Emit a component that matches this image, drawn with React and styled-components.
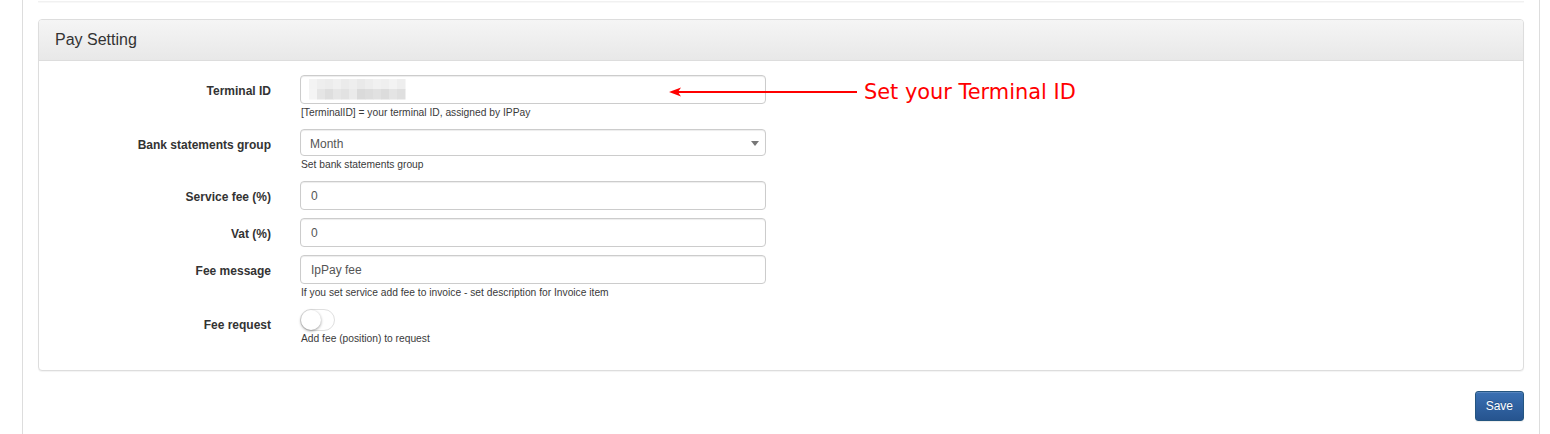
import React from 'react';
import styled, { createGlobalStyle } from 'styled-components';

const GlobalStyle = createGlobalStyle`
  html, body {
    margin: 0;
    padding: 0;
    background: #fff;
  }
  body {
    font-family: "Liberation Sans", Arial, sans-serif;
    color: #333;
  }
`;

const Page = styled.div`
  margin: 0 10px 0 22px;
  min-height: 434px;
  border-left: 1px solid #ddd;
  border-right: 1px solid #ddd;
  padding: 0 15px 0 15px;
  box-sizing: border-box;
  background: #fff;
`;

const PrevEdge = styled.div`
  height: 1px;
  margin-bottom: 17px;
  border-bottom: 1px solid #f1f1f1;
  box-shadow: 0 1px 1px rgba(0, 0, 0, 0.03);
`;

const Panel = styled.div`
  border: 1px solid #ddd;
  border-radius: 4px;
  background: #fff;
  box-shadow: 0 1px 1px rgba(0, 0, 0, 0.05);
`;

const PanelHeading = styled.div`
  height: 41px;
  box-sizing: border-box;
  padding: 10px 16px;
  border-bottom: 1px solid #ddd;
  border-radius: 3px 3px 0 0;
  background: linear-gradient(to bottom, #f5f5f5 0%, #e8e8e8 100%);
  font-size: 16px;
  line-height: 20px;
  color: #333;
`;

const PanelBody = styled.div`
  padding: 14px 0 23px 0;
`;

const Row = styled.div`
  display: flex;
  align-items: flex-start;
  margin-bottom: ${p => (p.$last ? 0 : '8px')};
`;

const Label = styled.label`
  width: 232px;
  flex: none;
  padding-top: 8px;
  line-height: 16px;
  text-align: right;
  font-weight: bold;
  font-size: 12px;
  color: #333;
`;

const Field = styled.div`
  position: relative;
  width: 466px;
  margin-left: 29px;
`;

const Input = styled.input`
  display: block;
  width: 100%;
  height: 29px;
  box-sizing: border-box;
  padding: 5px 10px;
  border: 1px solid #ccc;
  border-radius: 4px;
  box-shadow: inset 0 1px 1px rgba(0, 0, 0, 0.075);
  font-family: inherit;
  font-size: 12px;
  color: #555;
  background: #fff;
  outline: none;
`;

const SelectWrap = styled.div`
  position: relative;
  &::after {
    content: '';
    position: absolute;
    right: 7px;
    top: 12px;
    border-left: 4px solid transparent;
    border-right: 4px solid transparent;
    border-top: 5px solid #777;
    pointer-events: none;
  }
`;

const Select = styled.select`
  display: block;
  width: 100%;
  height: 27px;
  box-sizing: border-box;
  padding: 4px 9px 1px;
  border: 1px solid #ccc;
  border-radius: 4px;
  box-shadow: inset 0 1px 1px rgba(0, 0, 0, 0.075);
  font-family: inherit;
  font-size: 12px;
  color: #555;
  background: #fff;
  appearance: none;
  -webkit-appearance: none;
  outline: none;
`;

const Masked = styled.svg`
  position: absolute;
  left: 9px;
  top: 4px;
  pointer-events: none;
`;

const Help = styled.div`
  margin: 2px 0 1px 1px;
  font-size: 10.25px;
  line-height: 14px;
  color: #3a3a3a;
`;

const Switch = styled.div`
  position: relative;
  width: 35px;
  height: 22px;
  box-sizing: border-box;
  border: 1px solid #dfdfdf;
  border-radius: 11px;
  background: #fff;
`;

const Knob = styled.span`
  position: absolute;
  left: 0;
  top: 0;
  width: 20px;
  height: 20px;
  border-radius: 50%;
  background: #fff;
  box-shadow: 0 1px 3px rgba(0, 0, 0, 0.4);
`;

const SwitchHelp = styled(Help)`
  margin-top: 1px;
`;

const Note = styled.div`
  position: absolute;
  left: 369px;
  top: 5px;
  display: flex;
  align-items: center;
  white-space: nowrap;
  pointer-events: none;
`;

const NoteText = styled.span`
  margin-left: 5px;
  font-family: "DejaVu Sans", sans-serif;
  font-size: 20.9px;
  line-height: 24px;
  color: #f00;
`;

const Footer = styled.div`
  display: flex;
  justify-content: flex-end;
  padding-top: 20px;
`;

const SaveButton = styled.button`
  height: 30px;
  padding: 0 10px;
  border: 1px solid #245580;
  border-radius: 3px;
  background: linear-gradient(to bottom, #3a70b3 0%, #26548f 100%);
  box-shadow: inset 0 1px 0 rgba(255, 255, 255, 0.15), 0 1px 1px rgba(0, 0, 0, 0.075);
  color: #fff;
  font-family: inherit;
  font-size: 12px;
  text-shadow: 0 -1px 0 rgba(0, 0, 0, 0.2);
`;

const mosaic = [
  // top row
  ['#f3f3f3', 0, 0], ['#eeeeee', 1, 0], ['#ececec', 2, 0], ['#f0f0f0', 3, 0], ['#ebebeb', 4, 0],
  ['#eeeeee', 5, 0], ['#e9e9e9', 6, 0], ['#ededed', 7, 0], ['#f1f1f1', 8, 0], ['#efefef', 9, 0],
  ['#f3f3f3', 10, 0], ['#eeeeee', 11, 0],
  // bottom row
  ['#f4f4f4', 0, 1], ['#e5e5e5', 1, 1], ['#dedede', 2, 1], ['#e6e6e6', 3, 1], ['#e2e2e2', 4, 1],
  ['#eaeaea', 5, 1], ['#dadada', 6, 1], ['#dddddd', 7, 1], ['#e1e1e1', 8, 1], ['#dcdcdc', 9, 1],
  ['#e4e4e4', 10, 1], ['#dfdfdf', 11, 1],
];

const Arrow = () => (
  <svg width="190" height="14" viewBox="0 0 190 14">
    <line x1="8" y1="7" x2="188" y2="7" stroke="#f00" strokeWidth="2" />
    <polygon points="0,7 12,2.5 9,7 12,11.5" fill="#f00" />
  </svg>
);

const App = () => (
  <>
    <GlobalStyle />
    <Page>
      <PrevEdge />
      <Panel>
        <PanelHeading>Pay Setting</PanelHeading>
        <PanelBody>
          <Row>
            <Label>Terminal ID</Label>
            <Field>
              <Input type="text" defaultValue="" />
              <Masked width="97" height="21" viewBox="0 0 97 21">
                {mosaic.map(([c, x, y], i) => (
                  <rect key={i} x={x * 8} y={y * 10} width="8.5" height="10.5" fill={c} />
                ))}
              </Masked>
              <Note>
                <Arrow />
                <NoteText>Set your Terminal ID</NoteText>
              </Note>
              <Help>[TerminalID] = your terminal ID, assigned by IPPay</Help>
            </Field>
          </Row>
          <Row>
            <Label>Bank statements group</Label>
            <Field>
              <SelectWrap>
                <Select defaultValue="month">
                  <option value="month">Month</option>
                  <option value="week">Week</option>
                  <option value="day">Day</option>
                </Select>
              </SelectWrap>
              <Help>Set bank statements group</Help>
            </Field>
          </Row>
          <Row>
            <Label>Service fee (%)</Label>
            <Field>
              <Input type="text" defaultValue="0" />
            </Field>
          </Row>
          <Row>
            <Label>Vat (%)</Label>
            <Field>
              <Input type="text" defaultValue="0" />
            </Field>
          </Row>
          <Row>
            <Label>Fee message</Label>
            <Field>
              <Input type="text" defaultValue="IpPay fee" />
              <Help>If you set service add fee to invoice - set description for Invoice item</Help>
            </Field>
          </Row>
          <Row $last>
            <Label>Fee request</Label>
            <Field>
              <Switch>
                <Knob />
              </Switch>
              <SwitchHelp>Add fee (position) to request</SwitchHelp>
            </Field>
          </Row>
        </PanelBody>
      </Panel>
      <Footer>
        <SaveButton>Save</SaveButton>
      </Footer>
    </Page>
  </>
);

export default App;
